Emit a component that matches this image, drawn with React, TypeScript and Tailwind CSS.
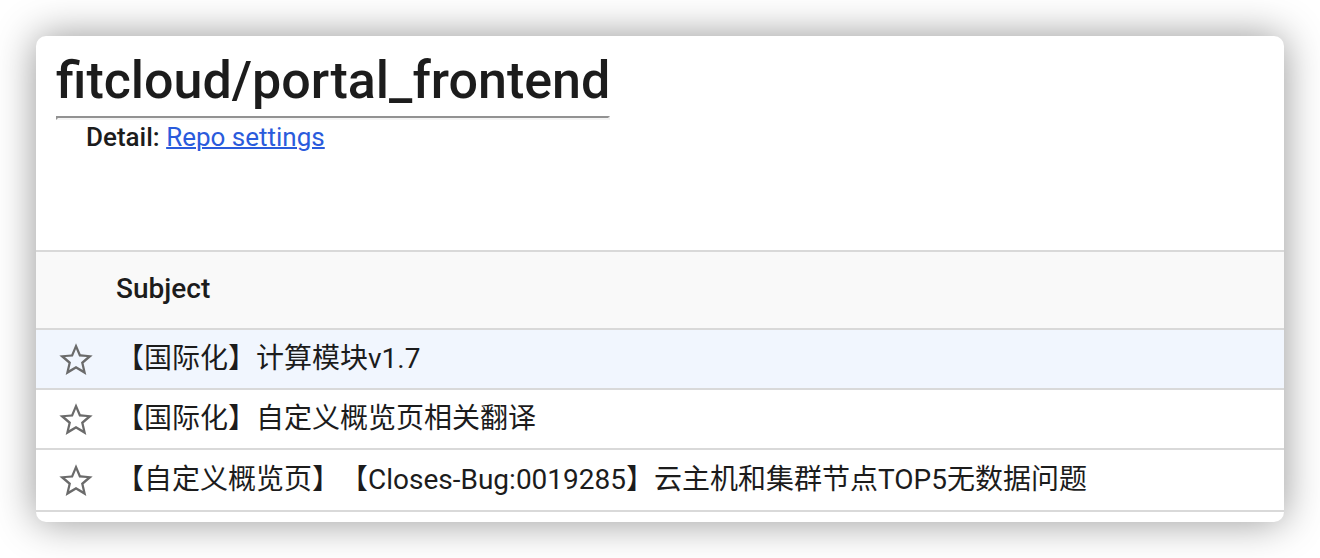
import React from "react";

const changes = [
  { id: 1, subject: "【国际化】计算模块v1.7" },
  { id: 2, subject: "【国际化】自定义概览页相关翻译" },
  { id: 3, subject: "【自定义概览页】【Closes-Bug:0019285】云主机和集群节点TOP5无数据问题" },
];

function StarIcon() {
  return (
    <svg viewBox="0 0 24 24" className="size-10 fill-[#6b6b6b]" aria-hidden="true">
      <path d="M22 9.24l-7.19-.62L12 2 9.19 8.63 2 9.24l5.46 4.73L5.82 21 12 17.27 18.18 21l-1.63-7.03L22 9.24zM12 15.6l-4.1 2.47 1.09-4.66-3.62-3.14 4.77-.41L12 5.46l1.86 4.4 4.77.41-3.62 3.14 1.09 4.66L12 15.6z" />
    </svg>
  );
}

export default function App() {
  return (
    <div className="bg-white p-9 font-[Roboto,'Noto_Sans_CJK_SC',sans-serif] text-[#1c1c1c]">
      <main className="overflow-hidden rounded-[10px] bg-white pb-2.5 shadow-[0_0_40px_rgba(0,0,0,0.42)]">
        <header className="flex h-[214px] flex-col items-start px-5 pt-4">
          <div>
            <h1 className="pb-1.5 text-[52px] leading-[58px] font-medium">fitcloud/portal_frontend</h1>
            <hr className="border-2 border-t-[#929292] border-r-[#eeeeee] border-b-[#f4f4f4] border-l-[#929292]" />
          </div>
          <p className="px-[30px] text-[26px] leading-[34px]">
            <span className="font-medium">Detail:</span>{" "}
            <a href="#settings" className="text-[#2a5bdc] underline decoration-2">Repo settings</a>
          </p>
        </header>
        <table className="w-full border-collapse text-left text-[28px]">
          <thead>
            <tr className="h-[78px] border-y-2 border-[#d9d9d9] bg-[#f9f9f9]">
              <th className="w-20" aria-label="Star"></th>
              <th className="pb-0.5 font-medium">Subject</th>
            </tr>
          </thead>
          <tbody>
            {changes.map((change) => (
              <tr key={change.id} className="h-[60px] border-b-2 border-[#d9d9d9] first:bg-[#f1f6fe] last:h-[62px]">
                <td className="pt-0.5">
                  <button type="button" aria-label="Star this change" className="mx-auto block">
                    <StarIcon />
                  </button>
                </td>
                <td className="leading-10 whitespace-nowrap [text-spacing-trim:space-all]">{change.subject}</td>
              </tr>
            ))}
          </tbody>
        </table>
      </main>
    </div>
  );
}
